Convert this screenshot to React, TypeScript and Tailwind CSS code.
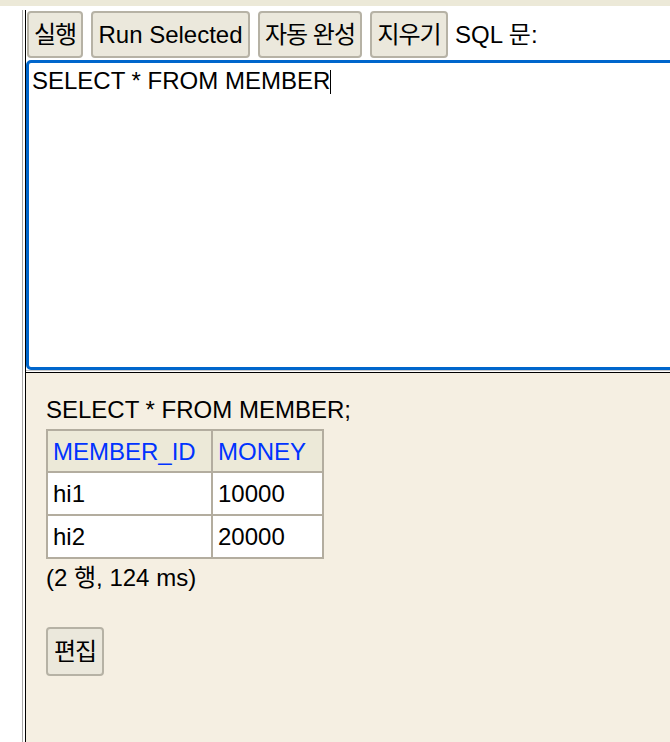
import React from "react";

const FONT = { fontFamily: '"Liberation Sans", "Noto Sans CJK KR", sans-serif' };

function Btn({ label, w }: { label: string; w: string }) {
  return (
    <div
      className={`${w} h-[47px] shrink-0 flex items-center justify-center rounded-[4px] border-2 border-[#b6b2a5] bg-[#ebe8dc] text-[24px] leading-[27px] text-black whitespace-nowrap tracking-[-1px]`}
    >
      {label}
    </div>
  );
}

export default function App() {
  return (
    <div className="w-[670px] h-[742px] overflow-hidden bg-white flex flex-col" style={FONT}>
      <div className="h-[6px] shrink-0 bg-[#ece9d8]" />
      <div className="flex flex-1 pt-[4px] min-h-0">
        <div className="w-[22px] shrink-0" />
        <div className="w-px shrink-0 bg-[#a8a8a8]" />
        <div className="w-[2px] shrink-0" />
        <div className="w-px shrink-0 bg-black" />
        <div className="flex-1 min-w-0 flex flex-col">
          <div className="flex items-center gap-[8px] pl-[1px] pt-[1px] shrink-0">
            <Btn label="실행" w="w-[56px]" />
            <div className="w-[159px] h-[47px] shrink-0 flex items-center justify-center rounded-[4px] border-2 border-[#b6b2a5] bg-[#ebe8dc] text-[24px] leading-[27px] text-black whitespace-nowrap">
              Run Selected
            </div>
            <Btn label="자동 완성" w="w-[104px]" />
            <Btn label="지우기" w="w-[78px]" />
            <span className="-ml-[1px] text-[24px] leading-[27px] text-black whitespace-nowrap">SQL 문:</span>
          </div>
          <div className="mt-[2px] h-[310px] w-[700px] shrink-0 border-[3px] border-[#0066cc] rounded-[5px] bg-white pl-[3px] pt-[4px]">
            <div className="text-[24px] leading-[27px] text-black whitespace-nowrap">
              SELECT * FROM MEMBER
              <span className="inline-block w-px h-[24px] bg-black align-[-5px]" />
            </div>
          </div>
          <div className="h-px shrink-0 bg-[#c8c8c8]" />
          <div className="h-px shrink-0 bg-white" />
          <div className="h-px shrink-0 bg-black" />
          <div className="flex-1 bg-[#f5efe2] pl-[20px] pt-[23px] text-[24px] leading-[27px] text-black">
            <div className="whitespace-nowrap">SELECT * FROM MEMBER;</div>
            <div className="mt-[6px] w-[278px] grid grid-cols-[163px_109px] gap-[2px] p-[2px] bg-[#b3ad9f]">
              <div className="h-[40px] bg-[#ece9d8] pl-[5px] flex items-center text-[#0033ff]">MEMBER_ID</div>
              <div className="h-[40px] bg-[#ece9d8] pl-[5px] flex items-center text-[#0033ff]">MONEY</div>
              <div className="h-[41px] bg-white pl-[5px] flex items-center">hi1</div>
              <div className="h-[41px] bg-white pl-[5px] flex items-center">10000</div>
              <div className="h-[41px] bg-white pl-[5px] flex items-center">hi2</div>
              <div className="h-[41px] bg-white pl-[5px] flex items-center">20000</div>
            </div>
            <div className="mt-[5px] whitespace-nowrap">(2 행, 124 ms)</div>
            <div className="mt-[36px] w-[58px] h-[49px] flex items-center justify-center rounded-[4px] border-2 border-[#b6b2a5] bg-[#ebe8dc] tracking-[-1px]">
              편집
            </div>
          </div>
        </div>
      </div>
    </div>
  );
}
